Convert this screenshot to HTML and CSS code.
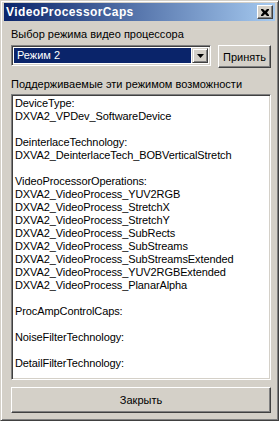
FILE: index.html
```html
<!DOCTYPE html>
<html lang="ru">
<head>
    <meta charset="UTF-8">
    <title>VideoProcessorCaps</title>
    <link rel="stylesheet" href="styles.css">
</head>
<body>
    <div class="window">
        <div class="titlebar">
            <span class="title">VideoProcessorCaps</span>
            <span class="close-btn">
                <svg width="8" height="7" viewBox="0 0 8 7">
                    <path d="M0 0h2l2 2 2-2h2v1L6 3.5 8 6v1H6L4 5 2 7H0V6l2-2.5L0 1z" fill="#000"/>
                </svg>
            </span>
        </div>
        <div class="content">
            <div class="label">Выбор режима видео процессора</div>
            <div class="mode-row">
                <div class="combo">
                    <div class="combo-value"><span class="selected">Режим 2</span></div>
                    <div class="combo-arrow">
                        <svg width="7" height="4" viewBox="0 0 7 4"><path d="M0 0h7L3.5 4z" fill="#000"/></svg>
                    </div>
                </div>
                <div class="btn btn-apply">Принять</div>
            </div>
            <div class="label label-caps">Поддерживаемые эти режимом возможности</div>
            <div class="caps-box">
                <div>DeviceType:</div>
                <div>DXVA2_VPDev_SoftwareDevice</div>
                <div>&nbsp;</div>
                <div>DeinterlaceTechnology:</div>
                <div>DXVA2_DeinterlaceTech_BOBVerticalStretch</div>
                <div>&nbsp;</div>
                <div>VideoProcessorOperations:</div>
                <div>DXVA2_VideoProcess_YUV2RGB</div>
                <div>DXVA2_VideoProcess_StretchX</div>
                <div>DXVA2_VideoProcess_StretchY</div>
                <div>DXVA2_VideoProcess_SubRects</div>
                <div>DXVA2_VideoProcess_SubStreams</div>
                <div>DXVA2_VideoProcess_SubStreamsExtended</div>
                <div>DXVA2_VideoProcess_YUV2RGBExtended</div>
                <div>DXVA2_VideoProcess_PlanarAlpha</div>
                <div>&nbsp;</div>
                <div>ProcAmpControlCaps:</div>
                <div>&nbsp;</div>
                <div>NoiseFilterTechnology:</div>
                <div>&nbsp;</div>
                <div>DetailFilterTechnology:</div>
            </div>
            <div class="btn btn-close">Закрыть</div>
        </div>
    </div>
</body>
</html>
```
FILE: styles.css
```css
* {
    box-sizing: border-box;
}
body {
    margin: 0;
    background: #d4d0c8;
    font-family: "Liberation Sans", Arial, sans-serif;
    font-size: 11px;
    color: #000;
}
.window {
    width: 279px;
    height: 421px;
    display: flex;
    flex-direction: column;
    background: #d4d0c8;
    border: 1px solid;
    border-color: #d4d0c8 #404040 #404040 #d4d0c8;
    box-shadow: inset 1px 1px #fff, inset -1px -1px #808080;
    padding: 2px 3px 3px 3px;
}
.titlebar {
    height: 18px;
    display: flex;
    align-items: center;
    justify-content: space-between;
    padding: 0 2px 0 2px;
    background: linear-gradient(to right, #0a246a, #a6caf0);
}
.title {
    color: #fff;
    font-weight: bold;
    font-size: 12px;
    letter-spacing: 0.4px;
}
.close-btn {
    width: 16px;
    height: 14px;
    display: flex;
    align-items: center;
    justify-content: center;
    background: #d4d0c8;
    border: 1px solid;
    border-color: #fff #404040 #404040 #fff;
    box-shadow: inset -1px -1px #808080;
}
.content {
    flex: 1;
    display: flex;
    flex-direction: column;
    padding: 0 4px 4px 7px;
}
.label {
    height: 13px;
    line-height: 13px;
    margin-top: 7px;
    white-space: nowrap;
}
.mode-row {
    display: flex;
    align-items: flex-start;
    gap: 7px;
    margin-top: 4px;
}
.combo {
    flex: 1;
    height: 21px;
    display: flex;
    background: #fff;
    border: 1px solid;
    border-color: #808080 #fff #fff #808080;
    box-shadow: inset 1px 1px #404040, inset -1px -1px #d4d0c8;
    padding: 2px;
}
.combo-value {
    flex: 1;
    display: flex;
    padding-right: 1px;
}
.selected {
    flex: 1;
    background: #0a246a;
    color: #fff;
    line-height: 15px;
    padding-left: 3px;
}
.combo-arrow {
    width: 16px;
    display: flex;
    align-items: center;
    justify-content: center;
    background: #d4d0c8;
    border: 1px solid;
    border-color: #d4d0c8 #404040 #404040 #d4d0c8;
    box-shadow: inset 1px 1px #fff, inset -1px -1px #808080;
}
.btn {
    display: flex;
    align-items: center;
    justify-content: center;
    background: #d4d0c8;
    border: 1px solid;
    border-color: #fff #404040 #404040 #fff;
    box-shadow: inset -1px -1px #808080;
}
.btn-apply {
    width: 53px;
    height: 23px;
}
.label-caps {
    margin-top: 10px;
}
.caps-box {
    flex: 1;
    margin-top: 3px;
    background: #fff;
    border: 1px solid;
    border-color: #808080 #fff #fff #808080;
    box-shadow: inset 1px 1px #404040, inset -1px -1px #d4d0c8;
    padding: 2px 3px;
    line-height: 13px;
    letter-spacing: -0.1px;
    white-space: nowrap;
    overflow: hidden;
}
.btn-close {
    height: 26px;
    margin-top: 7px;
}
```
